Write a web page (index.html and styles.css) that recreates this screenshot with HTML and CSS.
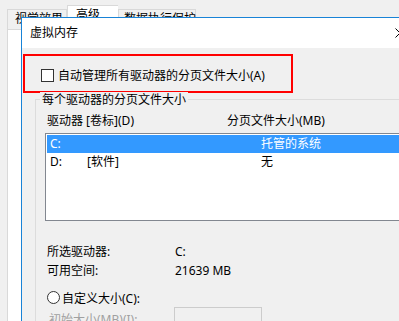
FILE: index.html
```html
<!DOCTYPE html>
<html lang="zh-CN">
<head>
    <meta charset="UTF-8">
    <title>虚拟内存</title>
    <link rel="stylesheet" href="styles.css">
</head>
<body>
    <div class="window">
        <div class="tabs">
            <div class="tab tab-1">视觉效果</div>
            <div class="tab tab-2 active">高级</div>
            <div class="tab tab-3">数据执行保护</div>
        </div>
        <div class="sheet"></div>
    </div>

    <div class="dialog">
        <div class="titlebar">
            <span>虚拟内存</span>
            <svg class="close" width="10" height="10" viewBox="0 0 10 10">
                <path d="M0.5 0.5 L9.5 9.5 M9.5 0.5 L0.5 9.5" stroke="#000" stroke-width="1" fill="none"/>
            </svg>
        </div>
        <div class="dialog-body">
            <div class="highlight">
                <label class="check"><span class="box"></span>自动管理所有驱动器的分页文件大小(A)</label>
            </div>

            <div class="group">
                <div class="group-title">每个驱动器的分页文件大小</div>
                <div class="head">
                    <span class="head-drive">驱动器 [卷标](D)</span>
                    <span>分页文件大小(MB)</span>
                </div>
                <div class="drives">
                    <div class="drive selected">
                        <span class="letter">C:</span>
                        <span class="volume"></span>
                        <span>托管的系统</span>
                    </div>
                    <div class="drive">
                        <span class="letter">D:</span>
                        <span class="volume">[软件]</span>
                        <span>无</span>
                    </div>
                </div>
                <div class="info"><span class="info-key">所选驱动器:</span><span>C:</span></div>
                <div class="info"><span class="info-key">可用空间:</span><span>21639 MB</span></div>
                <label class="radio"><span class="dot"></span>自定义大小(C):</label>
                <div class="field">
                    <span class="field-label">初始大小(MB)(I):</span>
                    <span class="input"></span>
                </div>
            </div>
        </div>
    </div>
</body>
</html>
```

FILE: styles.css
```css
body {
    margin: 0;
    width: 399px;
    height: 321px;
    overflow: hidden;
    position: relative;
    background-color: #f0f0f0;
    font-family: "Noto Sans", "Noto Sans CJK SC", sans-serif;
    font-size: 12px;
    color: #000;
}

/* window behind the dialog */
.window {
    height: 321px;
}
.tabs {
    display: flex;
    align-items: flex-end;
    height: 29px;
    padding-left: 7px;
}
.tab {
    box-sizing: border-box;
    height: 20px;
    line-height: 18px;
    padding-left: 7px;
    border: 1px solid #d9d9d9;
    border-bottom: none;
    background-color: #f0f0f0;
    white-space: nowrap;
}
.tab-1 { width: 60px; }
.tab-2 { width: 51px; padding-left: 8px; }
.tab-3 { width: 78px; padding-left: 5px; }
.tab.active {
    height: 24px;
    background-color: #fff;
    border-right: none;
    border-left: 1px solid #d9d9d9;
}
.sheet {
    margin-left: 7px;
    height: 292px;
    background-color: #fff;
    border-top: 1px solid #d9d9d9;
    border-left: 1px solid #d9d9d9;
}

/* dialog */
.dialog {
    position: absolute;
    left: 21px;
    top: 17px;
    box-sizing: border-box;
    width: 400px;
    height: 320px;
    background-color: #f0f0f0;
    border-top: 1px solid #1883d7;
    border-left: 1px solid #1883d7;
}
.titlebar {
    height: 30px;
    line-height: 30px;
    padding: 0 16px 0 8px;
    background-color: #fff;
    display: flex;
    justify-content: space-between;
    align-items: center;
}
.dialog-body {
    padding-top: 6px;
}
.highlight {
    box-sizing: border-box;
    width: 270px;
    height: 39px;
    margin-left: 1px;
    padding: 3px 0 0 16px;
    border: 2px solid #ff0000;
    display: flex;
    align-items: center;
}
.check, .radio {
    display: flex;
    align-items: center;
    white-space: nowrap;
}
.box {
    box-sizing: border-box;
    width: 13px;
    height: 13px;
    margin-right: 4px;
    border: 1px solid #333;
    background-color: #fff;
}

.group {
    position: relative;
    box-sizing: border-box;
    width: 400px;
    height: 240px;
    margin: 6px 0 0 13px;
    padding: 13px 0 0 9px;
    border: 1px solid #dcdcdc;
}
.group-title {
    position: absolute;
    top: -8px;
    left: 4px;
    padding: 0 2px;
    line-height: 16px;
    background-color: #f0f0f0;
}
.head {
    display: flex;
    line-height: 16px;
    padding-left: 2px;
}
.head-drive {
    width: 180px;
}
.drives {
    box-sizing: border-box;
    height: 88px;
    margin-top: 4px;
    padding: 1px;
    background-color: #fff;
    border: 1px solid #828790;
}
.drive {
    display: flex;
    height: 18px;
    line-height: 18px;
    padding-left: 3px;
    white-space: nowrap;
}
.drive.selected {
    background-color: #3399ff;
    color: #fff;
}
.letter { width: 37px; }
.volume { width: 174px; }

.info {
    display: flex;
    line-height: 19px;
    padding-left: 2px;
    margin-top: 21px;
}
.info + .info {
    margin-top: 0;
}
.info-key {
    width: 128px;
}
.radio {
    height: 19px;
    margin-top: 8px;
    padding-left: 2px;
}
.dot {
    box-sizing: border-box;
    width: 13px;
    height: 13px;
    margin-right: 2px;
    border: 1px solid #333;
    border-radius: 50%;
    background-color: #fff;
}
.field {
    display: flex;
    align-items: center;
    padding-left: 4px;
    color: #a0a0a0;
}
.field-label {
    width: 125px;
}
.input {
    box-sizing: border-box;
    width: 88px;
    height: 23px;
    border: 1px solid #cccccc;
    background-color: #f0f0f0;
}
```
